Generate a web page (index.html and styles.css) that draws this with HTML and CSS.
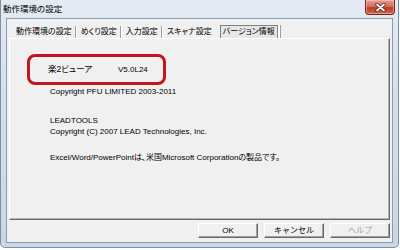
FILE: index.html
```html
<!DOCTYPE html>
<html lang="ja">
<head>
  <meta charset="UTF-8" />
  <title>動作環境の設定</title>
  <link rel="stylesheet" href="styles.css">
</head>
<body>

  <div class="window">
    <div class="titlebar">
      <span class="title">動作環境の設定</span>
      <button class="close-btn" aria-label="閉じる">
        <svg width="11" height="9" viewBox="0 0 11 9">
          <path d="M2 1.5 L9 7.5 M9 1.5 L2 7.5" stroke="#5a1e1e" stroke-width="3.4" stroke-linecap="round"/>
          <path d="M2 1.5 L9 7.5 M9 1.5 L2 7.5" stroke="#ffffff" stroke-width="1.8" stroke-linecap="round"/>
        </svg>
      </button>
    </div>

    <div class="client">
      <div class="tabs">
        <span class="tab">動作環境の設定</span>
        <span class="tab">めくり設定</span>
        <span class="tab">入力設定</span>
        <span class="tab">スキャナ設定</span>
        <span class="tab active">バージョン情報</span>
      </div>

      <div class="panel">
        <div class="product">
          <span class="product-name">楽2ビューア</span>
          <span>V5.0L24</span>
        </div>
        <p class="line pfu">Copyright PFU LIMITED 2003-2011</p>
        <p class="line lead">LEADTOOLS</p>
        <p class="line">Copyright (C) 2007 LEAD Technologies, Inc.</p>
        <p class="line note">Excel/Word/PowerPointは、米国Microsoft Corporationの製品です。</p>
      </div>

      <div class="buttons">
        <button class="btn">OK</button>
        <button class="btn">キャンセル</button>
        <button class="btn" disabled>ヘルプ</button>
      </div>
    </div>
  </div>

</body>
</html>
```

FILE: styles.css
```css
body {
  margin: 0;
  background-color: #ffffff;
  font-family: "Liberation Sans", "Noto Sans CJK JP", sans-serif;
  font-size: 8px;
  font-feature-settings: "palt";
  color: #000000;
}

.window {
  width: 399px;
  height: 248px;
  box-sizing: border-box;
  display: flex;
  flex-direction: column;
  padding: 0 5px 4px 5px;
  border: 1px solid #7d8fa6;
  border-top: none;
  border-radius: 0 0 5px 5px;
  background: linear-gradient(#e4ebf3, #d3dfeb 40%, #c9d7e6);
}

.titlebar {
  height: 18px;
  display: flex;
  align-items: flex-start;
  justify-content: space-between;
}

.title {
  margin-top: 4px;
  margin-left: -3px;
  font-size: 8.5px;
  line-height: 11px;
}

.close-btn {
  width: 30px;
  height: 15px;
  margin-right: -2px;
  padding: 0;
  display: flex;
  align-items: center;
  justify-content: center;
  border: 1px solid #6e2b24;
  border-top: none;
  border-radius: 0 0 4px 4px;
  background: linear-gradient(#e59f8f 0%, #d4705c 45%, #bd3a22 55%, #cf6a4c 100%);
  box-shadow: inset 0 0 0 1px rgba(255, 220, 210, 0.45);
}

.client {
  flex: 1;
  display: flex;
  flex-direction: column;
  background-color: #f0f0f0;
  border: 1px solid #8b9bb0;
}

.tabs {
  display: flex;
  align-items: center;
  height: 13px;
  margin-top: 6px;
  padding-left: 6px;
  line-height: 12px;
  font-size: 8px;
}

.tab {
  padding: 0 3px;
  border-right: 1px solid #a0a0a0;
  box-shadow: 1px 0 0 #ffffff;
  margin-right: 2px;
}

.tab.active {
  height: 12px;
  margin-left: 3px;
  padding: 0 2px;
  background-color: #e6e6e6;
  border-top: 1px solid #808080;
  border-left: 1px solid #808080;
  border-right: 1px solid #808080;
  box-shadow: 2px 0 0 #ffffff, 3px 0 0 #a0a0a0;
}

.tabs .tab:nth-child(4) {
  border-right: none;
  box-shadow: none;
}

.panel {
  flex: 1;
  margin: 0 2px 0 2px;
  padding-top: 15px;
  border-top: 1px solid #ffffff;
  border-left: 1px solid #ffffff;
  border-right: 1px solid #696969;
  border-bottom: 1px solid #696969;
  box-shadow: inset -1px -1px 0 #b4b4b4;
}

.product {
  width: 115px;
  margin-left: 17px;
  padding: 7px 0 7px 18px;
  display: flex;
  line-height: 11px;
  border: 3px solid #c3161c;
  border-radius: 8px;
}

.product-name {
  width: 70px;
  font-size: 8.5px;
}

.line {
  margin: 0 0 0 40px;
  line-height: 11px;
}

.pfu {
  margin-top: 1px;
}

.lead {
  margin-top: 18px;
}

.note {
  margin-top: 15px;
}

.buttons {
  display: flex;
  justify-content: flex-end;
  gap: 6px;
  padding: 3px 2px 4px 0;
}

.btn {
  width: 60px;
  height: 15px;
  padding: 0;
  font-family: inherit;
  font-size: 8px;
  line-height: 11px;
  color: #000000;
  background-color: #f0f0f0;
  border-top: 1px solid #ffffff;
  border-left: 1px solid #ffffff;
  border-right: 1px solid #696969;
  border-bottom: 1px solid #696969;
  box-shadow: inset -1px -1px 0 #a0a0a0;
}

.btn:disabled {
  color: #a0a0a0;
}
```
